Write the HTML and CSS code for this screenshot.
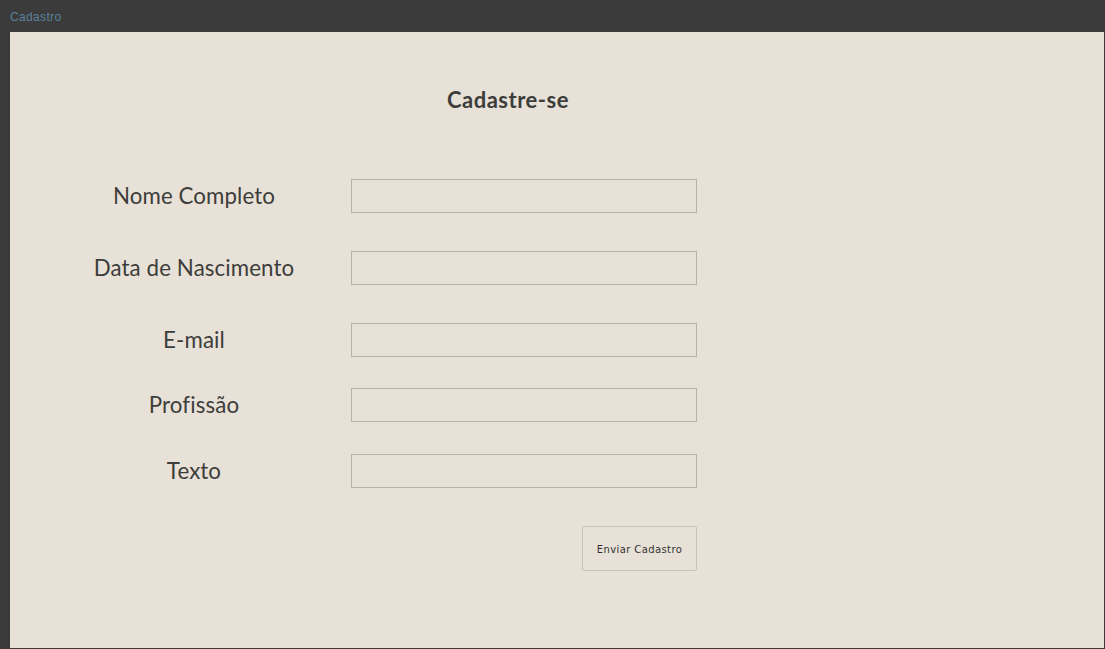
FILE: index.html
```html
<!DOCTYPE html>
<html lang="pt">
<head>
<meta charset="utf-8">
<title>Cadastro</title>
<link rel="stylesheet" href="styles.css">
</head>
<body>
<header class="topbar">Cadastro</header>
<main class="panel">
  <h1 class="title">Cadastre-se</h1>
  <form class="form">
    <div class="row">
      <label class="label">Nome Completo</label>
      <input class="field" type="text">
    </div>
    <div class="row">
      <label class="label">Data de Nascimento</label>
      <input class="field" type="text">
    </div>
    <div class="row">
      <label class="label">E-mail</label>
      <input class="field" type="text">
    </div>
    <div class="row row-tight">
      <label class="label">Profissão</label>
      <input class="field" type="text">
    </div>
    <div class="row row-semi">
      <label class="label">Texto</label>
      <input class="field" type="text">
    </div>
    <div class="row actions">
      <button class="btn" type="button">Enviar Cadastro</button>
    </div>
  </form>
</main>
</body>
</html>
```

FILE: styles.css
```css
html, body {
  margin: 0;
  padding: 0;
}
body {
  background: #3a3b3a;
  width: 1105px;
  height: 649px;
  overflow: hidden;
  font-family: Lato, "Noto Sans", sans-serif;
}
.topbar {
  height: 32px;
  box-sizing: border-box;
  padding: 10px 0 0 10px;
  font-family: "Liberation Sans", Arial, sans-serif;
  font-size: 12px;
  letter-spacing: 0.35px;
  line-height: 14px;
  color: #5f819b;
}
.panel {
  margin: 0 1px 0 10px;
  height: 616px;
  background: #e7e1d7;
  box-sizing: border-box;
  padding-top: 55px;
}
.title {
  margin: 0 0 0 309px;
  width: 378px;
  text-align: center;
  font-size: 22px;
  letter-spacing: 0.5px;
  line-height: 26px;
  font-weight: 700;
  color: #3d3d3b;
}
.form {
  margin: 66px 0 0 50px;
  display: flex;
  flex-direction: column;
}
.row {
  display: flex;
  align-items: center;
  gap: 23px;
  margin-bottom: 38px;
}
.row-tight {
  margin-top: -7px;
}
.row-semi {
  margin-top: -6px;
}
.label {
  width: 268px;
  text-align: center;
  font-size: 22.3px;
  letter-spacing: 0.1px;
  line-height: 26px;
  color: #3d3d3b;
}
.field {
  width: 346px;
  height: 34px;
  box-sizing: border-box;
  margin: 0;
  border: 1px solid #b8b3a9;
  background: #e7e1d7;
  border-radius: 0;
  outline: none;
}
.actions {
  justify-content: flex-end;
  width: 637px;
}
.btn {
  width: 115px;
  height: 45px;
  box-sizing: border-box;
  border: 1px solid #c8c2b7;
  border-radius: 2px;
  background: #e7e1d7;
  font-family: "DejaVu Sans", sans-serif;
  font-size: 10px;
  letter-spacing: 0.4px;
  color: #333;
  padding: 2px 0 0;
}
```
